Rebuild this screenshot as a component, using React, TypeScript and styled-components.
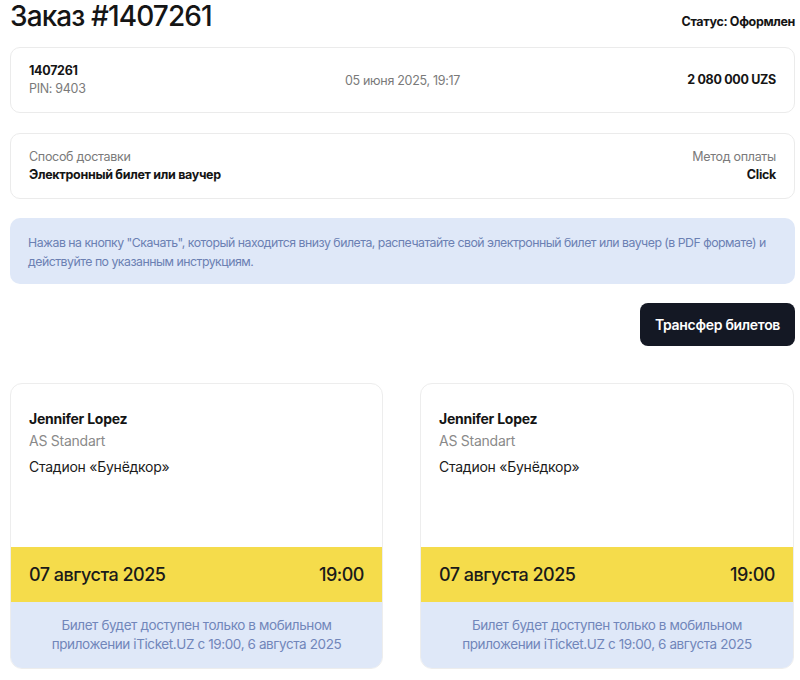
import styled, {createGlobalStyle} from "styled-components"

const GlobalStyle = createGlobalStyle`
  body {
    margin: 0;
    background: #ffffff;
    font-family: Inter, "Noto Sans", "Liberation Sans", sans-serif;
    color: #141414;
  }
`

type Ticket = {
  artist: string
  sector: string
  venue: string
  date: string
  time: string
}

const tickets: Ticket[] = [
  {artist: "Jennifer Lopez", sector: "AS Standart", venue: "Стадион «Бунёдкор»", date: "07 августа 2025", time: "19:00"},
  {artist: "Jennifer Lopez", sector: "AS Standart", venue: "Стадион «Бунёдкор»", date: "07 августа 2025", time: "19:00"},
]

const TicketCard = ({ticket}: {ticket: Ticket}) => (
  <TicketBox>
    <TicketBody>
      <Artist>{ticket.artist}</Artist>
      <Sector>{ticket.sector}</Sector>
      <Venue>{ticket.venue}</Venue>
    </TicketBody>
    <DateBand>
      <span>{ticket.date}</span>
      <span>{ticket.time}</span>
    </DateBand>
    <Notice>
      Билет будет доступен только в мобильном приложении iTicket.UZ с 19:00, 6 августа 2025
    </Notice>
  </TicketBox>
)

export default function App() {
  return (
    <Page>
      <GlobalStyle />
      <Header>
        <Title>Заказ #1407261</Title>
        <Status>Статус: Оформлен</Status>
      </Header>

      <Card>
        <Column>
          <Strong>1407261</Strong>
          <Muted>PIN: 9403</Muted>
        </Column>
        <DateText>05 июня 2025, 19:17</DateText>
        <Column $right>
          <Strong>2 080 000 UZS</Strong>
        </Column>
      </Card>

      <Card>
        <Column>
          <Muted>Способ доставки</Muted>
          <Strong>Электронный билет или ваучер</Strong>
        </Column>
        <span />
        <Column $right>
          <Muted>Метод оплаты</Muted>
          <Strong>Click</Strong>
        </Column>
      </Card>

      <Info>
        <InfoLine>Нажав на кнопку "Скачать", который находится внизу билета, распечатайте свой электронный билет или ваучер (в PDF формате) и</InfoLine>
        <InfoLine>действуйте по указанным инструкциям.</InfoLine>
      </Info>

      <Actions>
        <TransferButton>Трансфер билетов</TransferButton>
      </Actions>

      <Tickets>
        {tickets.map((t, i) => <TicketCard ticket={t} key={i} />)}
      </Tickets>
    </Page>
  )
}

const Page = styled.div`
  padding: 0 5px 0 10px;
  display: flex;
  flex-direction: column;
`

const Header = styled.div`
  display: flex;
  justify-content: space-between;
  align-items: baseline;
  margin-top: -2px;
  margin-bottom: 13px;
`

const Title = styled.h1`
  margin: 0;
  font-size: 28px;
  line-height: 36px;
  font-weight: 500;
  letter-spacing: -0.9px;
  color: #151515;
`

const Status = styled.div`
  font-size: 12.5px;
  font-weight: 700;
  letter-spacing: -0.35px;
  color: #151515;
`

const Card = styled.div`
  display: grid;
  grid-template-columns: 1fr auto 1fr;
  align-items: center;
  height: 66px;
  box-sizing: border-box;
  padding: 0 18px;
  border: 1px solid #ebebeb;
  border-radius: 10px;
  margin-bottom: 20px;
`

const Column = styled.div<{$right?: boolean}>`
  display: flex;
  flex-direction: column;
  align-items: ${({$right}) => ($right ? "flex-end" : "flex-start")};
  font-size: 12.5px;
  line-height: 18px;
  letter-spacing: -0.3px;
`

const Strong = styled.div`
  font-weight: 700;
  color: #151515;
`

const Muted = styled.div`
  color: #7a7a7a;
`

const DateText = styled.div`
  font-size: 12.5px;
  letter-spacing: -0.3px;
  color: #7a7a7a;
`

const Info = styled.div`
  background: #dfe8f8;
  border-radius: 10px;
  height: 66px;
  box-sizing: border-box;
  padding: 15px 8px 0 18px;
  font-size: 12.3px;
  line-height: 19px;
  letter-spacing: -0.5px;
  color: #6b80b3;
  margin-top: -1px;
  overflow: hidden;
`

const InfoLine = styled.div`
  white-space: nowrap;
`

const Actions = styled.div`
  display: flex;
  justify-content: flex-end;
  margin-top: 19px;
`

const TransferButton = styled.button`
  width: 155px;
  height: 43px;
  border: none;
  border-radius: 8px;
  background: #141824;
  color: #ffffff;
  font-family: inherit;
  font-size: 14px;
  font-weight: 600;
  letter-spacing: -0.3px;
`

const Tickets = styled.div`
  display: grid;
  grid-template-columns: 373px 374px;
  column-gap: 37px;
  margin-top: 37px;
`

const TicketBox = styled.div`
  border: 1px solid #ededed;
  border-radius: 12px;
  overflow: hidden;
  display: flex;
  flex-direction: column;
`

const TicketBody = styled.div`
  height: 163px;
  box-sizing: border-box;
  padding: 24px 18px 0;
  display: flex;
  flex-direction: column;
  letter-spacing: -0.25px;
`

const Artist = styled.div`
  font-size: 14px;
  line-height: 22px;
  font-weight: 700;
  color: #141414;
`

const Sector = styled.div`
  font-size: 14px;
  line-height: 22px;
  color: #8a8a8a;
`

const Venue = styled.div`
  font-size: 14px;
  line-height: 22px;
  margin-top: 4px;
  color: #1a1a1a;
`

const DateBand = styled.div`
  height: 55px;
  background: #f5dc4b;
  display: flex;
  align-items: center;
  justify-content: space-between;
  padding: 0 18px;
  font-size: 18px;
  font-weight: 500;
  letter-spacing: -0.5px;
  color: #1a1a1a;
`

const Notice = styled.div`
  background: #dfe8f8;
  height: 66px;
  box-sizing: border-box;
  padding: 14px 30px 0;
  text-align: center;
  font-size: 13.5px;
  line-height: 19px;
  letter-spacing: -0.4px;
  color: #7186ba;
`
